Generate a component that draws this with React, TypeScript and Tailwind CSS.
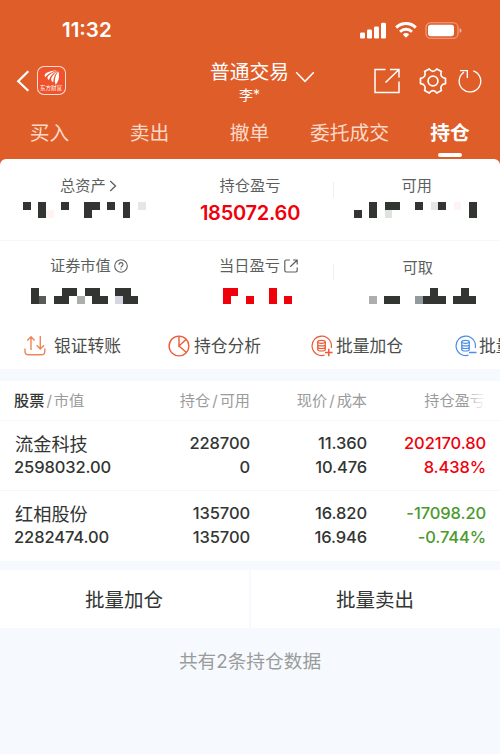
import type { ReactNode } from "react";
import clsx from "clsx";

const TABS = ["买入", "卖出", "撤单", "委托成交", "持仓"];

interface Holding {
  name: string;
  marketValue: string;
  amount: string;
  available: string;
  price: string;
  cost: string;
  profit: string;
  ratio: string;
  up: boolean;
}

const HOLDINGS: Holding[] = [
  {
    name: "流金科技",
    marketValue: "2598032.00",
    amount: "228700",
    available: "0",
    price: "11.360",
    cost: "10.476",
    profit: "202170.80",
    ratio: "8.438%",
    up: true,
  },
  {
    name: "红相股份",
    marketValue: "2282474.00",
    amount: "135700",
    available: "135700",
    price: "16.820",
    cost: "16.946",
    profit: "-17098.20",
    ratio: "-0.744%",
    up: false,
  },
];

// one letter per block of a masked value, "." is empty
const MASK_COLORS: Record<string, string> = {
  "#": "#323532",
  m: "#595b59",
  G: "#adadad",
  b: "#929a9e",
  l: "#e6e6e6",
  g: "#dfe3df",
  v: "#d6d6e0",
  p: "#fff3f4",
  r: "#f0000a",
};

const CELL_W = 7.67;
const CELL_H = 7.8;

function Mask({ rows, className }: { rows: string[]; className?: string }) {
  const width = rows[0].length * CELL_W;
  return (
    <svg width={width} height={16} viewBox={`0 0 ${width} 16`} shapeRendering="crispEdges" className={className}>
      {rows.map((row, y) =>
        row.split("").map((c, x) =>
          c === "." ? null : (
            <rect
              key={`${x}-${y}`}
              x={x * CELL_W}
              y={y * CELL_H}
              width={CELL_W}
              height={CELL_H}
              fill={MASK_COLORS[c]}
            />
          ),
        ),
      )}
    </svg>
  );
}

function StatusBar() {
  return (
    <div className="flex h-[58px] items-center justify-between pl-[62px] pr-[38px] pt-[2px]">
      <span className="text-[20.500px] font-semibold leading-6 tracking-[0px]">11:32</span>
      <div className="flex items-center">
        <svg width="27" height="17" viewBox="0 0 27 17" fill="#fff">
          <rect x="0" y="10.5" width="5" height="6" rx="1.3" />
          <rect x="7" y="7.5" width="5" height="9" rx="1.3" />
          <rect x="14" y="4.5" width="5" height="12" rx="1.3" />
          <rect x="21" y="0.7" width="5" height="15.8" rx="1.3" />
        </svg>
        <svg width="22" height="16" viewBox="0 0 22 16" fill="none" className="ml-[8px]">
          <path d="M1.2 5.600a14 14 0 0 1 19.600 0" stroke="#fff" strokeWidth="3" />
          <path d="M5 9.700a8.600 8.600 0 0 1 12 0" stroke="#fff" strokeWidth="2.800" />
          <path d="M11 15.800 7.800 12.600a4.700 4.700 0 0 1 6.400 0z" fill="#fff" />
        </svg>
        <svg width="37" height="17" viewBox="0 0 37 17" className="ml-[8px]">
          <rect x="1" y="0.7" width="32" height="15.6" rx="4.6" fill="none" stroke="#fff" strokeOpacity="0.45" strokeWidth="1.100" />
          <rect x="3" y="2.700" width="26" height="11.600" rx="2.800" fill="#fff" />
          <path d="M34.600 6v5c1.200-.5 1.900-1.400 1.900-2.500S35.800 6.500 34.600 6z" fill="#fff" fillOpacity="0.55" />
        </svg>
      </div>
    </div>
  );
}

function BrandLogo() {
  return (
    <div className="ml-[7px] flex h-[29px] w-[29px] flex-col items-center overflow-hidden rounded-[7px] border border-white/80 bg-[#f0522b]">
      <svg width="18" height="17" viewBox="0 0 19 17" fill="#fff" className="mt-[2px] shrink-0">
        <path d="M14.500 1c-5 .2-10 1.300-12 3.500C1.300 5.800 1.700 7 2.700 8.200 4 5.500 8 2.600 14.500 1z" />
        <path d="M15.200 1.200C10.500 3 6.200 5.600 4.800 8.300c-.5 1.200.3 2.200 1.500 2.900C7.300 7.500 11 3.600 15.200 1.200z" />
        <path d="M15.700 1.500C12 4.200 8.800 7.800 8.600 10.700c0 1.300 1 2.200 2.200 2.700.1-4.400 2-8.600 4.900-11.900z" />
        <path d="M16.100 2c-2.400 3.500-3.800 7.200-3.600 10.700.1 1.500.4 2.600.9 3.300 2.800-2.800 4.800-8.600 2.700-14z" />
      </svg>
      <span className="-mt-[2px] origin-top scale-[0.92] whitespace-nowrap text-[6px] leading-[8px]">东方财富</span>
    </div>
  );
}

function NavBar() {
  return (
    <div className="flex h-[52px] items-center pl-[16px] pr-[18px]">
      <div className="flex w-[194px] items-center pb-[7px]">
        <svg width="14" height="22" viewBox="0 0 14 22" fill="none" stroke="#fff" strokeWidth="2.200">
          <path d="M12.300 1.300 2.200 11.200l10.100 9.500" />
        </svg>
        <BrandLogo />
      </div>
      <div className="flex flex-1 items-start pb-[4px]">
        <div className="flex flex-col items-center">
          <span className="text-[19.800px] leading-[26px]">普通交易</span>
          <span className="text-[14px] leading-[20px]">李*</span>
        </div>
        <svg width="20" height="12" viewBox="0 0 20 12" fill="none" stroke="#fff" strokeWidth="1.500" className="ml-[6px] mt-[12px]">
          <path d="M1.200 1.200 10 10.300l8.800-9.100" />
        </svg>
      </div>
      <div className="flex items-center pb-[6px]">
        <svg width="26" height="26" viewBox="0 0 26 26" fill="none" stroke="#fff" strokeWidth="1.500">
          <path d="M11.500 1.500H1v23h24V13.500M16 1.500h9v8M24.500 2 11.500 14.500" />
        </svg>
        <svg width="28" height="28" viewBox="0 0 28 28" fill="none" stroke="#fff" strokeWidth="1.700" strokeLinejoin="round" className="ml-[19px]">
          <path d="M10.200 1.900C11.400 3.700 12.500 4.400 14 4.400s2.600-.7 3.800-2.500l4.600 2.600c-.9 2-.8 3.300 0 4.600.8 1.400 1.900 2 4.100 2.200v5.400c-2.200.2-3.300.8-4.100 2.200-.8 1.300-.9 2.600 0 4.600l-4.600 2.600c-1.200-1.800-2.300-2.500-3.800-2.500s-2.600.7-3.800 2.500l-4.600-2.600c.9-2 .8-3.300 0-4.600-.8-1.400-1.900-2-4.100-2.200v-5.400c2.200-.2 3.300-.8 4.100-2.200.8-1.300.9-2.600 0-4.600z" />
          <circle cx="14" cy="14" r="4.900" />
        </svg>
        <svg width="24" height="24" viewBox="0 0 24 24" fill="none" stroke="#fff" strokeWidth="1.300" className="ml-[11px]">
          <path d="M15.200 1.800A10.800 10.800 0 1 1 6 3.100M2 1.700h7.300v7.300" />
        </svg>
      </div>
    </div>
  );
}

function Tabs() {
  return (
    <div className="flex h-[49px]">
      {TABS.map((tab, i) => {
        const active = i === TABS.length - 1;
        return (
          <div key={tab} className="flex w-[100px] flex-col items-center whitespace-nowrap pt-[9px]">
            <span
              className={clsx(
                "text-[19.800px] leading-[28px]",
                active ? "font-bold text-white" : "pr-px text-[#fbd9c8]",
              )}
            >
              {tab}
            </span>
            {active && <span className="mt-[6px] h-[4px] w-[24px] rounded-full bg-white" />}
          </div>
        );
      })}
    </div>
  );
}

function Stat({ label, icon, children, className }: { label: string; icon?: ReactNode; children: ReactNode; className?: string }) {
  return (
    <div className={clsx("flex w-1/3 flex-col items-center", className)}>
      <div className="flex h-[22px] items-center text-[15.200px] leading-[22px] text-[#5c5f5d]">
        {label}
        {icon}
      </div>
      {children}
    </div>
  );
}

function Summary() {
  return (
    <div>
      <div className="relative flex h-[82px] border-b border-[#f7f7f7] pt-[16px]">
        <Stat
          label="总资产"
          className="pl-[10px]"
          icon={
            <svg width="8" height="12" viewBox="0 0 8 12" fill="none" stroke="#5c5f5d" strokeWidth="1.300" className="ml-[3px]">
              <path d="M1.200 1 6.500 6l-5.300 5" />
            </svg>
          }
        >
          <Mask className="mr-[8px] mt-[5px]" rows={["#.#..#..##.#.#.l", "..#p....#....#.."]} />
        </Stat>
        <Stat label="持仓盈亏">
          <span className="mt-[4px] text-[20px] font-semibold leading-[24px] tracking-[-0.250px] text-[#f0000a]">185072.60</span>
        </Stat>
        <Stat label="可用">
          <Mask className="mr-[3px] mt-[5px]" rows={["..#.##..#.l#.p.#", "#.#.g..........#"]} />
        </Stat>
        <span className="absolute left-[333px] top-[23px] h-4 w-px bg-[#f0f0f0]" />
      </div>
      <div className="relative flex h-[81px] pt-[14px]">
        <Stat
          label="证券市值"
          className="pl-[11px]"
          icon={
            <svg width="14" height="14" viewBox="0 0 14 14" fill="none" stroke="#5c5f5d" strokeWidth="1.100" className="ml-[3px]">
              <circle cx="7" cy="7" r="6.300" />
              <path d="M5 5.700c0-1.300.9-2.100 2-2.100s2 .8 2 1.900c0 1.400-2 1.500-2 3M7 9.500v1.200" />
            </svg>
          }
        >
          <Mask className="mr-[8px] mt-[11px]" rows={["#...##.##..##.", "#m.##.G.##.v##"]} />
        </Stat>
        <Stat
          label="当日盈亏"
          className="pl-[17px]"
          icon={
            <svg width="14" height="14" viewBox="0 0 14 14" fill="none" stroke="#5c5f5d" strokeWidth="1.200" className="ml-[4px]">
              <path d="M6 1H2.200Q.8 1 .8 2.400v9.200q0 1.400 1.400 1.400h9.600q1.400 0 1.400-1.400V8.500M9 1h4.200v4.500M13 1.200 6.200 7.800" />
            </svg>
          }
        >
          <Mask className="mr-[2px] mt-[11px]" rows={["rr....r..", "r..r..r.r"]} />
        </Stat>
        <Stat label="可取" className="pl-[2px] pt-[2px]">
          <Mask className="ml-[10px] mt-[9px]" rows={["........#...#.", "G.##..b###.###"]} />
        </Stat>
        <span className="absolute left-[333px] top-[23px] h-4 w-px bg-[#f0f0f0]" />
      </div>
    </div>
  );
}

function BatchIcon({ color, minus }: { color: string; minus?: boolean }) {
  return (
    <svg width="22" height="22" viewBox="0 0 22 22" fill="none" stroke={color} strokeWidth="1.200" className="shrink-0">
      <path d="M13.500 20.100A9.700 9.700 0 1 1 20.200 13" />
      <ellipse cx="10.500" cy="6.800" rx="3.800" ry="1.500" />
      <path d="M6.700 6.800v7.700c0 .8 1.700 1.500 3.800 1.500s3.800-.7 3.800-1.500V6.800M6.700 9.400c0 .8 1.700 1.500 3.800 1.500s3.800-.7 3.800-1.500M6.700 12c0 .8 1.700 1.500 3.800 1.500s3.800-.7 3.800-1.500" />
      <path d={minus ? "M14 17.500h7.500" : "M14 17.500h7.500M17.800 13.800v7.500"} strokeWidth="1.500" />
    </svg>
  );
}

function QuickActions() {
  return (
    <div className="flex h-[47px] items-center overflow-hidden whitespace-nowrap text-[16.800px] leading-6 text-[#4a4d4a]">
      <div className="ml-[24px] flex w-[144px] shrink-0 items-center gap-[8px]">
        <svg width="22" height="22" viewBox="0 0 22 22" fill="none" stroke="#ee8659" strokeWidth="1.400">
          <path d="M1 13.500v2.700q0 3.600 3.600 3.600h12.600q3.600 0 3.600-3.600v-2.700M7 15V2M3.300 5.500 7 1.700l3.600 3.800M16.300 1v12.800M12.700 10.300l3.600 3.800 3.700-3.800" />
        </svg>
        银证转账
      </div>
      <div className="flex w-[143px] shrink-0 items-center gap-[4px]">
        <svg width="22" height="22" viewBox="0 0 22 22" fill="none" stroke="#ec5b35" strokeWidth="1.400">
          <circle cx="11" cy="11" r="9.900" />
          <path d="M11 1.200V11l7-6.500M11 11l7.500 6.500" />
        </svg>
        持仓分析
      </div>
      <div className="flex w-[144px] shrink-0 items-center gap-[3px]">
        <BatchIcon color="#ec5b35" />
        批量加仓
      </div>
      <div className="flex shrink-0 items-center gap-[2px]">
        <BatchIcon color="#4b8fe6" minus />
        批量
      </div>
    </div>
  );
}

function HeadCell({ main, sub }: { main: string; sub: string }) {
  return (
    <span className="text-right">
      {main}
      <span className="px-[2px]">/</span>
      {sub}
    </span>
  );
}

const GRID = "grid grid-cols-[110px_126px_117px_119px] px-[14px]";

function HoldingsTable() {
  return (
    <div className="bg-white">
      <div className={clsx(GRID, "relative h-[40px] items-center whitespace-nowrap border-b border-[#f7f7f7] text-[15.200px] leading-[22px] text-[#9a9c9b]")}>
        <span>
          <span className="font-medium text-[#323532]">股票</span>
          <span className="px-[2px]">/</span>
          市值
        </span>
        <HeadCell main="持仓" sub="可用" />
        <HeadCell main="现价" sub="成本" />
        <span className="pr-px text-right">持仓盈亏</span>
        <span className="absolute right-[14px] top-0 h-full w-[18px] bg-linear-to-r from-white/20 to-white" />
      </div>
      {HOLDINGS.map((h) => (
        <div
          key={h.name}
          className={clsx(
            GRID,
            "h-[70px] border-b border-[#f7f7f7] pt-[10px] text-right text-[16.500px] font-medium leading-[24px] tracking-[-0.100px] text-[#323532] last:border-b-0",
          )}
        >
          <div className="text-left">
            <div className="h-[24px] pl-[1px] pt-px text-[18.200px] font-normal tracking-normal">{h.name}</div>
            <div>{h.marketValue}</div>
          </div>
          <div>
            <div>{h.amount}</div>
            <div>{h.available}</div>
          </div>
          <div>
            <div>{h.price}</div>
            <div>{h.cost}</div>
          </div>
          <div className={h.up ? "text-[#f0000a]" : "text-[#4a9a2c]"}>
            <div>{h.profit}</div>
            <div>{h.ratio}</div>
          </div>
        </div>
      ))}
    </div>
  );
}

export default function App() {
  return (
    <div className="h-[754px] w-[500px] overflow-hidden bg-[#f6faff] font-['Inter','Noto_Sans_CJK_SC',sans-serif]">
      <div className="bg-[#df5d29] text-white">
        <StatusBar />
        <NavBar />
        <Tabs />
        <div className="h-[210px] rounded-t-[6px] bg-white">
          <Summary />
          <QuickActions />
        </div>
      </div>
      <div className="mt-3">
        <HoldingsTable />
      </div>
      <div className="mt-[9px] flex h-[58px] gap-[2px] text-[19.500px] text-[#323532]">
        <button className="flex-1 bg-white pr-px pt-[4px]">批量加仓</button>
        <button className="flex-1 bg-white pr-px pt-[4px]">批量卖出</button>
      </div>
      <p className="mt-[20px] text-center text-[18.700px] leading-[28px] text-[#9a9c9b]">共有2条持仓数据</p>
    </div>
  );
}
